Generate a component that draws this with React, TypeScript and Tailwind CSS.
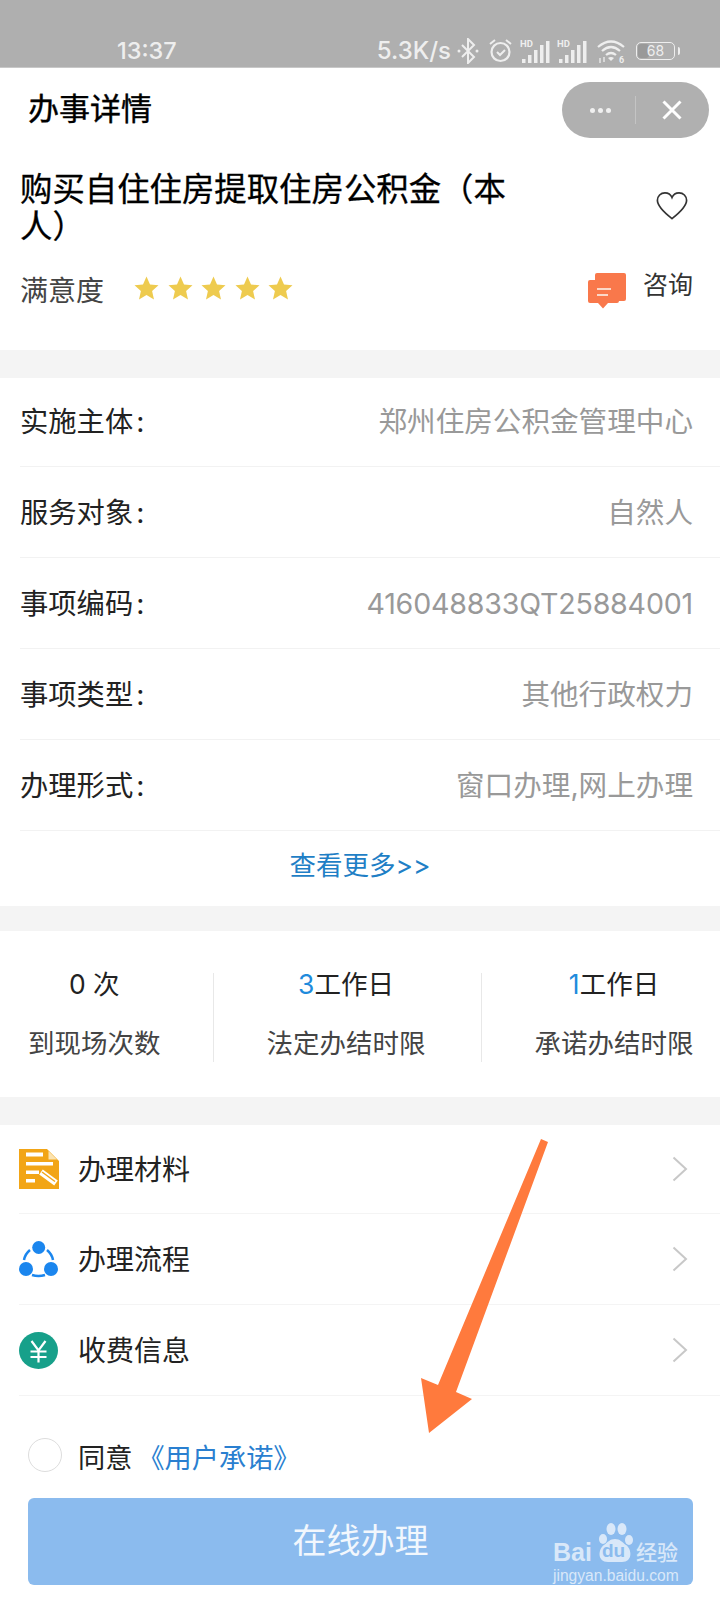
import React from "react";

const Star = () => (
  <svg width="25" height="24" viewBox="0 0 25 24" className="block">
    <path d="M12.5 0.5l3.5 8 8.5 .8-6.4 5.7 1.900 8.500-7.500-4.400-7.500 4.400 1.900-8.500L0.500 9.300 9 8.500z" fill="#eecb4f" />
  </svg>
);

const InfoRow = ({ label, value, h, vc = "" }: { label: string; value: string; h: string; vc?: string }) => (
  <div className={`flex items-center justify-between border-b border-[#f2f2f2] pr-[27px] ${h}`}>
    <span className="text-[28.300px] text-[#222]">
      {label}
      <span className="ml-[3px]">:</span>
    </span>
    <span className={`text-[28.600px] text-[#999] ${vc}`}>{value}</span>
  </div>
);

const Chevron = () => (
  <svg width="16" height="26" viewBox="0 0 16 26" className="block">
    <path d="M1.500 1.500L14 13 1.500 24.500" fill="none" stroke="#c8c8c8" strokeWidth="2" />
  </svg>
);

const DocIcon = () => (
  <svg width="40" height="40" viewBox="0 0 40 40" className="block">
    <path d="M0 0h28l12 12v28H0z" fill="#f2a516" />
    <path d="M29.500 2l8.500 8.500h-8.500z" fill="#fbe3b0" />
    <path d="M7 3.500h17v4H7zM7 13h27v3.500H7zM7 21.500h13v3.500H7zM7 30h9v3.500H7z" fill="#fff" />
    <path d="M22 23l15 11" stroke="#fff" strokeWidth="6" />
    <path d="M23 23l13 9.500" stroke="#f2a516" strokeWidth="1.500" />
  </svg>
);

const FlowIcon = () => (
  <svg width="39" height="37" viewBox="0 0 39 37" className="block">
    <path d="M11 9A17 17 0 0 0 5 19M28 9a17 17 0 0 1 6 10M13 34q6.500 2 13 0" fill="none" stroke="#1b86ee" strokeWidth="2.500" />
    <circle cx="19.700" cy="6.500" r="6.500" fill="#1b86ee" />
    <circle cx="7" cy="28" r="7" fill="#1b86ee" />
    <circle cx="32" cy="28" r="7" fill="#1b86ee" />
  </svg>
);

const YuanIcon = () => (
  <svg width="39" height="37" viewBox="0 0 39 37" className="block">
    <ellipse cx="19.500" cy="18.500" rx="19.500" ry="18.500" fill="#17a08a" />
    <path d="M12.500 9l7 9.500L26.500 9M11.500 19.500h16M11.500 25h16M19.500 18.500v12" fill="none" stroke="#fff" strokeWidth="2.200" />
  </svg>
);

const ListRow = ({ icon, label, h }: { icon: React.ReactNode; label: string; h: string }) => (
  <div className={`flex items-center border-b border-[#f4f4f4] pr-[32px] ${h}`}>
    <div className="w-[59px] shrink-0">{icon}</div>
    <span className="mt-[2px] flex-1 text-[28px] text-[#222]">{label}</span>
    <Chevron />
  </div>
);

const Stat = ({ value, label }: { value: React.ReactNode; label: string }) => (
  <div className="flex shrink-0 flex-col items-center whitespace-nowrap">
    <div className="text-[26.500px] leading-[36px] text-[#222]">{value}</div>
    <div className="mt-[23px] text-[26.500px] leading-[36px] text-[#444]">{label}</div>
  </div>
);

const Signal = ({ className }: { className: string }) => (
  <svg width="32" height="26" viewBox="0 0 32 26" className={`block ${className}`}>
    <text x="0" y="9" fontSize="9.500" fontWeight="700" fontFamily="Roboto, sans-serif" fill="#eee">HD</text>
    <path d="M2 21h3.500v4H2zM8 17h3.500v8H8zM14 12h3.500v13H14zM20 7h3.500v18H20zM26 3h3.500v22H26z" fill="#eee" />
  </svg>
);

export default function App() {
  return (
    <div className="relative h-[1600px] w-[720px] overflow-hidden bg-white font-['Inter','Noto_Sans_CJK_SC',sans-serif] [text-spacing-trim:space-all]">
      {/* status bar */}
      <div className="flex h-[68px] items-end justify-between border-b border-[#c8c8c8] bg-[#afafaf] pb-[2px] pl-[117px] pr-[40px] text-[#eeeeee]">
        <span className="text-[23.500px] font-medium leading-[28px]">13:37</span>
        <div className="flex items-center">
          <span className="text-[24px] font-medium leading-[28px]">5.3K/s</span>
          <svg width="22" height="26" viewBox="0 0 22 26" className="ml-[6px] block">
            <path d="M5 7l12 12-6 6V1l6 6L5 19" fill="none" stroke="#eee" strokeWidth="2" />
            <circle cx="2" cy="13" r="1.500" fill="#eee" />
            <circle cx="20" cy="13" r="1.500" fill="#eee" />
          </svg>
          <svg width="25" height="26" viewBox="0 0 25 26" className="ml-[9px] block">
            <circle cx="12.500" cy="14" r="9" fill="none" stroke="#eee" strokeWidth="2.200" />
            <path d="M9 14l3 3 5-5M2 6l5-4M23 6l-5-4" fill="none" stroke="#eee" strokeWidth="2" />
          </svg>
          <Signal className="ml-[7px]" />
          <Signal className="ml-[5px]" />
          <svg width="30" height="26" viewBox="0 0 30 26" className="ml-[8px] block">
            <path d="M1 9q13-11 26 0M5 13q9-8 18 0M9 17q5-4 10 0" fill="none" stroke="#eee" strokeWidth="2.200" />
            <path d="M14 23l-3-3q3-2 6 0z" fill="#eee" />
            <path d="M3 20v5M7 19v5" stroke="#eee" strokeWidth="1.300" />
            <text x="22" y="25" fontSize="9" fontWeight="700" fontFamily="Roboto, sans-serif" fill="#eee">6</text>
          </svg>
          <div className="relative ml-[9px] flex h-[18px] w-[39px] items-center justify-center rounded-[5px] border-[1.500px] border-[#eee] text-[14px] leading-none">
            <span className="absolute bottom-[1px] left-[1px] top-[1px] w-[11px] rounded-[3px] bg-[#999]" />
            <span className="relative">68</span>
          </div>
          <span className="ml-[3px] h-[8px] w-[2px] rounded-r bg-[#eee]" />
        </div>
      </div>

      {/* nav bar */}
      <div className="flex h-[82px] items-center justify-between pl-[28px] pr-[11px]">
        <span className="text-[31px] font-normal leading-[40px] text-[#000] [-webkit-text-stroke:0.4px_#000]">办事详情</span>
        <div className="mt-[2px] flex h-[56px] w-[147px] items-center rounded-full bg-[#b0b0b0]">
          <div className="flex w-[73px] justify-center gap-[3px] pl-[3px]">
            <span className="h-[5px] w-[5px] rounded-full bg-[#f0f0f0]" />
            <span className="h-[5px] w-[5px] rounded-full bg-[#f0f0f0]" />
            <span className="h-[5px] w-[5px] rounded-full bg-[#f0f0f0]" />
          </div>
          <span className="h-[28px] w-px bg-[#c4c4c4]" />
          <svg width="20" height="20" viewBox="0 0 20 20" className="ml-[26px] block">
            <path d="M1.500 1.500l17 17M18.500 1.500l-17 17" stroke="#fff" strokeWidth="3" />
          </svg>
        </div>
      </div>

      {/* heading */}
      <div className="h-[200px] px-[20px]">
        <div className="flex items-start justify-between pr-[12px]">
          <h1 className="mt-[21px] w-[510px] text-[32.400px] font-normal leading-[37px] text-[#000] [-webkit-text-stroke:0.3px_#000]">购买自住住房提取住房公积金（本人）</h1>
          <svg width="32" height="30" viewBox="0 0 34 31" className="mt-[41px] block">
            <path d="M17 29C8 22 1.500 16 1.500 9.500 1.500 5 5 1.500 9.500 1.500c3 0 6 1.500 7.500 5 1.500-3.500 4.500-5 7.500-5 4.500 0 8 3.500 8 8C32.500 16 26 22 17 29z" fill="none" stroke="#333" strokeWidth="1.800" />
          </svg>
        </div>
        <div className="mt-[26px] flex items-center pr-[7px]">
          <span className="w-[114px] text-[28px] leading-[40px] text-[#444]">满意度</span>
          <div className="mb-[6px] flex gap-[8.500px]">
            <Star /><Star /><Star /><Star /><Star />
          </div>
          <div className="ml-auto flex items-start self-start">
            <svg width="40" height="36" viewBox="0 0 40 36" className="mt-[2px] block">
              <rect x="7" y="0" width="31" height="28" rx="2" fill="#f9784b" />
              <path d="M2 7h27q2 0 2 2v19q0 2-2 2H20l-5 5.500L10 30H2q-2 0-2-2V9q0-2 2-2z" fill="#f9784b" />
              <path d="M9 16h14M9 22h11" stroke="#fbd8c8" strokeWidth="1.800" />
            </svg>
            <span className="ml-[15px] mt-[-6px] text-[25px] leading-[40px] text-[#333]">咨询</span>
          </div>
        </div>
      </div>

      <div className="h-[28px] bg-[#f4f4f4]" />

      {/* info */}
      <div className="pl-[20px]">
        <InfoRow label="实施主体" value="郑州住房公积金管理中心" h="h-[89px]" />
        <InfoRow label="服务对象" value="自然人" h="h-[91px] pt-[2px]" />
        <InfoRow label="事项编码" value="416048833QT25884001" h="h-[91px] pt-[2px]" vc="tracking-[-0.2px]" />
        <InfoRow label="事项类型" value="其他行政权力" h="h-[91px] pt-[2px]" />
        <InfoRow label="办理形式" value="窗口办理,网上办理" h="h-[91px] pt-[2px]" />
      </div>
      <div className="flex h-[75px] items-center justify-center pb-[5px] text-[26.500px] text-[#1f7fc6]">查看更多&gt;&gt;</div>

      <div className="h-[25px] bg-[#f4f4f4]" />

      {/* stats */}
      <div className="flex h-[166px] items-start gap-[52.500px] px-[28px] pt-[35px]">
        <Stat value="0 次" label="到现场次数" />
        <div className="mt-[7px] h-[89px] w-px shrink-0 bg-[#e8e8e8]" />
        <Stat value={<><span className="text-[#1f8bdc]">3</span>工作日</>} label="法定办结时限" />
        <div className="ml-[3px] mt-[7px] h-[89px] w-px shrink-0 bg-[#e8e8e8]" />
        <Stat value={<><span className="text-[#1f8bdc]">1</span>工作日</>} label="承诺办结时限" />
      </div>

      <div className="h-[28px] bg-[#f4f4f4]" />

      {/* list */}
      <div className="pl-[19px]">
        <ListRow icon={<DocIcon />} label="办理材料" h="h-[89px]" />
        <ListRow icon={<FlowIcon />} label="办理流程" h="h-[91px]" />
        <ListRow icon={<YuanIcon />} label="收费信息" h="h-[91px]" />
      </div>

      {/* agreement */}
      <div className="flex h-[102px] items-center pl-[28px] pt-[25px]">
        <span className="mt-[-9px] h-[34px] w-[34px] rounded-full border border-[#ddd]" />
        <span className="ml-[16px] text-[27.200px] text-[#222]">同意<span className="ml-[5px] text-[#2a7fd0]">《用户承诺》</span></span>
      </div>

      {/* button */}
      <div className="relative mx-[28px] flex h-[87px] w-[665px] items-center justify-center rounded-[6px] bg-[#8bbbee] pb-[3px]">
        <span className="text-[34px] text-[#f2f7fd]">在线办理</span>
      </div>

      {/* baidu watermark */}
      <div className="absolute left-[553px] top-[1520px] h-[66px] w-[130px] text-[#d9e8f9]">
        <span className="absolute left-0 top-[17px] font-['Liberation_Sans',sans-serif] text-[25px] font-bold leading-[30px]">Bai</span>
        <svg width="38" height="42" viewBox="0 0 38 42" className="absolute left-[43px] top-[2px] block">
          <ellipse cx="7" cy="17" rx="4" ry="5" fill="#d9e8f9" />
          <ellipse cx="15" cy="7" rx="4.500" ry="6" fill="#d9e8f9" />
          <ellipse cx="26" cy="7" rx="4.500" ry="6" fill="#d9e8f9" />
          <ellipse cx="33" cy="18" rx="4" ry="5" fill="#d9e8f9" />
          <path d="M19 17c5 0 7 3 11 6 6 4 7 17-4 17H12C1 40 2 27 8 23c4-3 6-6 11-6z" fill="#d9e8f9" />
        </svg>
        <span className="absolute left-[49px] top-[20px] font-['Liberation_Sans',sans-serif] text-[19px] font-bold leading-[22px] text-[#8bbbee]">du</span>
        <span className="absolute left-[83px] top-[20px] text-[21px] font-medium leading-[26px]">经验</span>
        <span className="absolute left-0 top-[47px] whitespace-nowrap font-['Liberation_Sans',sans-serif] text-[15.600px] leading-[18px]">jingyan.baidu.com</span>
      </div>

      {/* annotation arrow */}
      <svg width="720" height="1600" viewBox="0 0 720 1600" className="pointer-events-none absolute left-0 top-0 block">
        <path d="M541 1139L548 1142 456 1392 472 1399 429 1433 421 1378 438 1385Z" fill="#ff7a3d" />
      </svg>
    </div>
  );
}
